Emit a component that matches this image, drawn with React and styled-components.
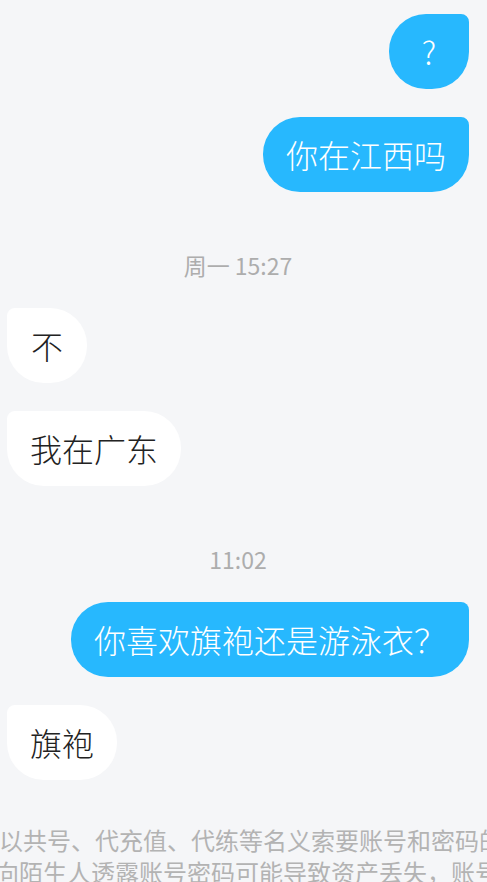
import React from "react";
import styled, { createGlobalStyle } from "styled-components";

const GlobalStyle = createGlobalStyle`
  html, body {
    margin: 0;
    padding: 0;
    background: #f5f6f8;
  }
  body {
    font-family: "Noto Sans CJK SC", "Noto Sans", sans-serif;
  }
`;

const messages = [
  { id: 1, mine: true, text: "?" },
  { id: 2, mine: true, text: "你在江西吗" },
  { id: 3, time: "周一 15:27" },
  { id: 4, mine: false, text: "不" },
  { id: 5, mine: false, text: "我在广东" },
  { id: 6, time: "11:02" },
  { id: 7, mine: true, text: "你喜欢旗袍还是游泳衣？" },
  { id: 8, mine: false, text: "旗袍" },
];

const App = () => {
  return (
    <>
      <GlobalStyle />
      <Page>
        <List>
          {messages.map((m) =>
            m.time ? (
              <Time key={m.id}>{m.time}</Time>
            ) : (
              <Row key={m.id} mine={m.mine}>
                <Bubble mine={m.mine}>{m.text}</Bubble>
              </Row>
            )
          )}
        </List>
        <Notice>
          <NoticeLine>以共号、代充值、代练等名义索要账号和密码的</NoticeLine>
          <NoticeLine shift>向陌生人透露账号密码可能导致资产丢失，账号</NoticeLine>
        </Notice>
      </Page>
    </>
  );
};

const Page = styled.div`
  width: 487px;
  height: 882px;
  overflow: hidden;
  background: #f5f6f8;
  display: flex;
  flex-direction: column;
`;

const List = styled.div`
  display: flex;
  flex-direction: column;
  gap: 28px;
  padding: 14px 18px 0 7px;
`;

const Row = styled.div`
  display: flex;
  justify-content: ${(props) => (props.mine ? "flex-end" : "flex-start")};
`;

const Bubble = styled.div`
  min-width: 80px;
  box-sizing: border-box;
  padding: 19px 23px 20px;
  font-size: 32px;
  font-weight: 300;
  line-height: 36px;
  text-align: center;
  color: ${(props) => (props.mine ? "#ffffff" : "#222222")};
  background: ${(props) => (props.mine ? "#27b8fe" : "#ffffff")};
  border-radius: ${(props) => (props.mine ? "37px 8px 37px 37px" : "8px 37px 37px 37px")};
`;

const Time = styled.div`
  margin: 30px 0 0;
  text-align: center;
  font-size: 23px;
  line-height: 30px;
  color: #adadad;
`;

const Notice = styled.div`
  margin-top: 44px;
  display: flex;
  flex-direction: column;
  font-size: 24px;
  line-height: 32px;
  color: #b3b3b3;
`;

const NoticeLine = styled.div`
  white-space: nowrap;
  margin-left: ${(props) => (props.shift ? "-5px" : "-1px")};
`;

export default App;
